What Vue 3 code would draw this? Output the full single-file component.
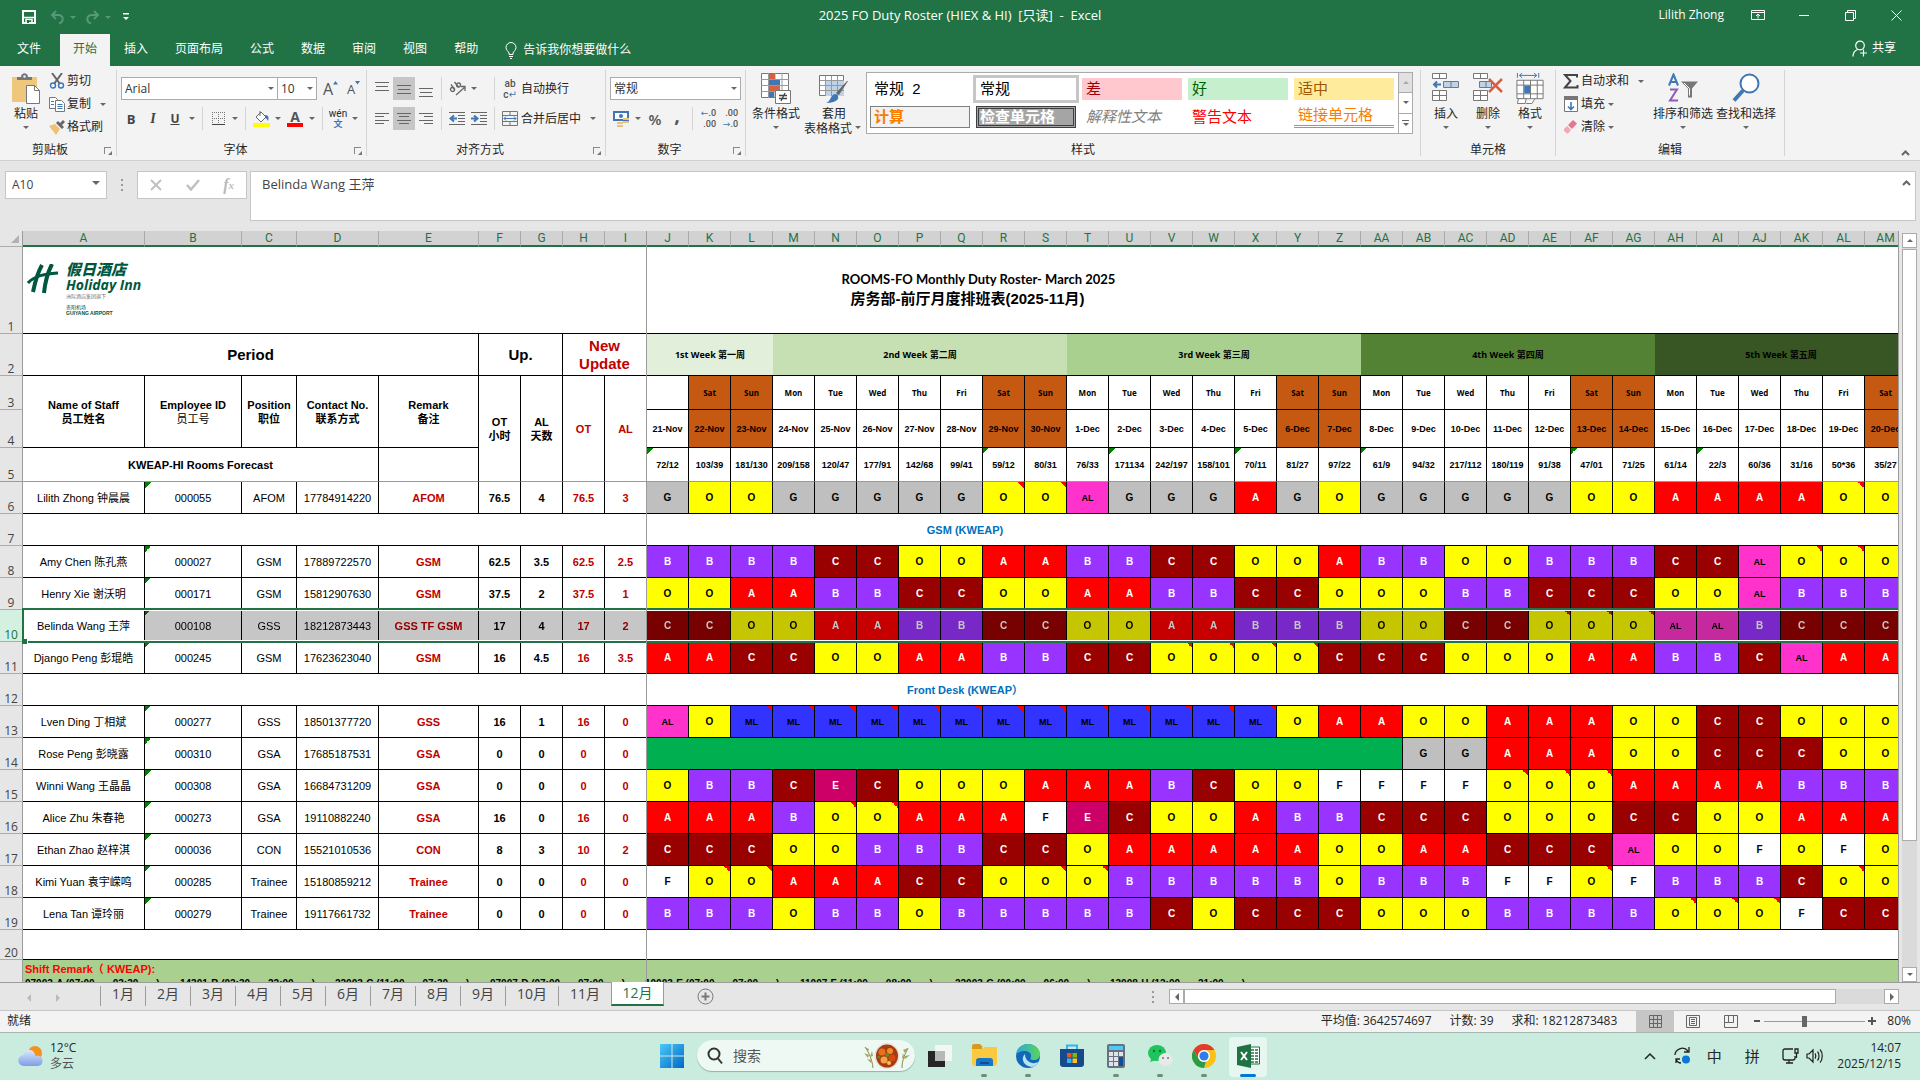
<script setup>
const tabs = ['插入', '页面布局', '公式', '数据', '审阅', '视图', '帮助']
const months = Array.from({ length: 12 }, (_, i) => `${i + 1}月`)

const staffWidths = [122, 97, 55, 82, 100, 42, 42, 42, 42]
const dayWidth = 42
const colWidths = [23, ...staffWidths, ...Array(30).fill(dayWidth)]
const freezeLeft = 22 + staffWidths.reduce((a, b) => a + b, 0)

const letters = Array.from({ length: 39 }, (_, i) =>
  i < 26 ? String.fromCharCode(65 + i) : 'A' + String.fromCharCode(39 + i)
)

const weekdays = ['Sat', 'Sun', 'Mon', 'Tue', 'Wed', 'Thu', 'Fri']
const days = Array.from({ length: 30 }, (_, i) => {
  const name = i === 0 ? '' : weekdays[(i - 1) % 7]
  return {
    name,
    date: i < 10 ? `${21 + i}-Nov` : `${i - 9}-Dec`,
    weekend: name === 'Sat' || name === 'Sun'
  }
})

const weeks = [
  { text: '1st Week 第一周', span: 3, cls: 'w1' },
  { text: '2nd Week 第二周', span: 7, cls: 'w2' },
  { text: '3rd Week 第三周', span: 7, cls: 'w3' },
  { text: '4th Week 第四周', span: 7, cls: 'w4' },
  { text: '5th Week 第五周', span: 6, cls: 'w5' }
]

const forecast = (
  '72/12^ 103/39 181/130 209/158 120/47 177/91 142/68 99/41 59/12^ 80/31 76/33 171134^ 242/197 158/101 70/11^ ' +
  '81/27 97/22 61/9^ 94/32 217/112 180/119 91/38 47/01^ 71/25 61/14 22/3^ 60/36 31/16 50*36 35/27'
).split(' ').map(t => ({ text: t.replace('^', ''), mark: t.endsWith('^') }))

const parse = s => s.split(' ').map(t => ({ code: t.replace('*', ''), note: t.endsWith('*') }))

const person = (row, name, id, pos, tel, remark, nums, codes, leave = 0) => ({
  row, name, id, pos, tel, remark, nums, leave, shifts: parse(codes)
})

const rows = [
  person(6, 'Lilith Zhong 钟晨晨', '000055', 'AFOM', '17784914220', 'AFOM', ['76.5', '4', '76.5', '3'],
    'G O O G G G G G O* O* AL G G G A G O G G G G G O O A A A A O* O'),
  { row: 7, section: 'GSM (KWEAP)' },
  person(8, 'Amy Chen 陈孔燕', '000027', 'GSM', '17889722570', 'GSM', ['62.5', '3.5', '62.5', '2.5'],
    'B B B B C C O O A A B B C C O O A B B O O B B B C C AL O* O* O'),
  person(9, 'Henry Xie 谢沃明', '000171', 'GSM', '15812907630', 'GSM', ['37.5', '2', '37.5', '1'],
    'O O A A B B C C O O A A B B C C O O O B B C C C O O AL B B B'),
  person(10, 'Belinda Wang 王萍', '000108', 'GSS', '18212873443', 'GSS TF GSM', ['17', '4', '17', '2'],
    'C C O O A A B B C C O O A A B B B O O C C O* O* O* AL AL B C C C'),
  person(11, 'Django Peng 彭琨皓', '000245', 'GSM', '17623623040', 'GSM', ['16', '4.5', '16', '3.5'],
    'A A C C O O A A B B C C O* O* O* O* C C C O O O A A B B C AL A A'),
  { row: 12, section: 'Front Desk (KWEAP）' },
  person(13, 'Lven Ding 丁相斌', '000277', 'GSS', '18501377720', 'GSS', ['16', '1', '16', '0'],
    'AL O ML* ML* ML* ML* ML* ML* ML* ML* ML* ML* ML* ML* ML* O A A O O A A A O O C C O O O'),
  person(14, 'Rose Peng 彭晓露', '000310', 'GSA', '17685187531', 'GSA', ['0', '0', '0', '0'],
    'G G A A A O O C C C O O', 18),
  person(15, 'Winni Wang 王晶晶', '000308', 'GSA', '16684731209', 'GSA', ['0', '0', '0', '0'],
    'O B B C E C O O O A A A B C O O F F F F O* O* O* A A A A B B B'),
  person(16, 'Alice Zhu 朱春艳', '000273', 'GSA', '19110882240', 'GSA', ['16', '0', '16', '0'],
    'A A A B O* O* A A A F E C O O A B B C C C O O O C C O O A A A'),
  person(17, 'Ethan Zhao 赵梓淇', '000036', 'CON', '15521010536', 'CON', ['8', '3', '10', '2'],
    'C C C O O B B B C C O A A A A A O O A A C C C AL O O F O F O'),
  person(18, 'Kimi Yuan 袁宇嵘鸣', '000285', 'Trainee', '15180859212', 'Trainee', ['0', '0', '0', '0'],
    'F O* O* A A A C C O O* O* B B B B B O B B B F F O* F B B B C O* O'),
  person(19, 'Lena Tan 谭玲丽', '000279', 'Trainee', '19117661732', 'Trainee', ['0', '0', '0', '0'],
    'B B B O B B O B B B B B C O C C C O O O B B B B O* O* O* F C C')
]

const remarks = [
  ['07003-A (07:00', '03:30', ')'], ['14301-B (02:30', '22:00', ')'], ['22003-C (11:00', '07:30', ')'],
  ['07007-D (07:00', '07:00', ')'], ['10003-E (07:00', '07:00', ')'], ['11007-F (11:00', '08:00', ')'],
  ['22003-G (00:00', '06:00', ')'], ['13008-H (12:00', '21:00', ')']
]
</script>

<template>
  <div class="window">
    <header class="titlebar">
      <div class="quick">
        <button aria-label="保存"><svg width="14" height="14" viewBox="0 0 14 14"><path d="M1 1h12v12H1z" fill="none" stroke="#fff" stroke-width="2" /><path d="M2 7.5h10M4 9.500h6V13H4z" fill="none" stroke="#fff" stroke-width="1.500" /><path d="M5 10h2v3H5z" fill="#217346" /></svg></button>
        <button class="dim undo" aria-label="撤消"><svg width="15" height="15" viewBox="0 0 15 15" fill="none" stroke="currentColor" stroke-width="2"><path d="M6 1 2 5l4 4M2 5h6c6 0 6 7 1 8.500" /></svg><i class="dd"></i></button>
        <button class="dim redo" aria-label="恢复"><svg width="15" height="15" viewBox="0 0 15 15" fill="none" stroke="currentColor" stroke-width="2"><path d="m9 1 4 4-4 4M13 5H7c-6 0-6 7-1 8.500" /></svg><i class="dd"></i></button>
        <button class="more" aria-label="自定义"><svg width="8" height="8" viewBox="0 0 8 8"><path d="M1 0h6v1.500H1zM1 4h6L4 7z" fill="#fff" /></svg></button>
      </div>
      <h1>2025 FO Duty Roster (HIEX &amp; HI)&nbsp; [只读]&nbsp; -&nbsp; Excel</h1>
      <div class="winctl">
        <span>Lilith Zhong</span>
        <button aria-label="功能区显示选项"><svg width="14" height="12" viewBox="0 0 14 12" fill="none" stroke="#fff"><path d="M.5 1.500h13v9H.5zM.5 3.500h13M7 9.500v-4M5 7l2-2 2 2" /></svg></button>
        <button aria-label="最小化"><svg width="10" height="10" viewBox="0 0 10 10"><path d="M0 5h10v1H0z" fill="#fff" /></svg></button>
        <button aria-label="还原"><svg width="11" height="11" viewBox="0 0 11 11" fill="none" stroke="#fff"><path d="M.5 2.500h8v8h-8zM2.500 2.500v-2h8v8h-2" /></svg></button>
        <button aria-label="关闭"><svg width="11" height="11" viewBox="0 0 11 11" fill="none" stroke="#fff"><path d="m.5.5 10 10M10.500.5l-10 10" /></svg></button>
      </div>
    </header>

    <nav class="tabs">
      <button class="file">文件</button>
      <button class="active">开始</button>
      <button v-for="t in tabs" :key="t">{{ t }}</button>
      <button class="tell"><svg width="12" height="17" viewBox="0 0 12 17" fill="none" stroke="#fff"><path d="M4 12.500V11C3 9 1 8 1 5.500a5 5 0 0 1 10 0C11 8 9 9 8 11v1.500zM4 14.500h4M5 16.500h2" /></svg>告诉我你想要做什么</button>
      <button class="share"><svg width="16" height="17" viewBox="0 0 16 17" fill="none" stroke="#fff" stroke-width="1.200"><circle cx="8" cy="5.500" r="4.300" /><path d="M1 16.500c0-4 2-6 4.500-7M11.500 9.500v7M8 13h7" /></svg>共享</button>
    </nav>

    <section class="ribbon">
      <div class="group g-clip">
        <div class="body clip">
          <button class="big"><svg width="28" height="31" viewBox="0 0 28 31"><path d="M0 4h25v25H0z" fill="#efc77c" /><path d="M5 7V4h4c0-5 7-5 7 0h4v3z" fill="#777" /><circle cx="12.500" cy="3.500" r="1.200" fill="#f3f3f3" /><path d="M14.500 12.500h8l5 5v13h-13z" fill="#fff" stroke="#777" /><path d="M22.500 12.500v5h5" fill="none" stroke="#777" /></svg>粘贴<i class="dd"></i></button>
          <div class="stack">
            <button><svg width="16" height="16" viewBox="0 0 16 16" fill="none"><path d="m3 0 8 11M13 0 5 11" stroke="#666" stroke-width="2" /><circle cx="4" cy="12.500" r="2.500" stroke="#3f77b5" stroke-width="1.400" /><circle cx="12" cy="12.500" r="2.500" stroke="#3f77b5" stroke-width="1.400" /></svg>剪切</button>
            <button><svg width="16" height="16" viewBox="0 0 16 16" fill="#fff" stroke="#777"><path d="M.5 1.500h6l2 2v9h-8z" /><path d="M6.500 4.500h6l3 3v8h-9z" /><path d="M2 5.500h3M2 8.500h3M8.500 8.500h5M8.500 10.500h5M8.500 12.500h5" stroke="#3f77b5" /></svg>复制<i class="dd far"></i></button>
            <button><svg width="16" height="15" viewBox="0 0 16 15"><path d="m0 6 6-2 5 5-4 6z" fill="#efc077" /><path d="m7 3 2-2 6 6-2 2zM11 3l3-3 2 2-3 3z" fill="#666" /></svg>格式刷</button>
          </div>
        </div>
        <div class="label">剪贴板<i class="launch"></i></div>
      </div>

      <div class="group g-font">
        <div class="body">
          <div class="line">
            <span class="box f"><select aria-label="字体"><option>Arial</option></select><i class="dd"></i></span>
            <span class="box s"><select aria-label="字号"><option>10</option></select><i class="dd"></i></span>
            <button class="ib grow">A<svg width="5" height="4"><path d="M0 3.500 2.500 0 5 3.500z" fill="#3f77b5" /></svg></button>
            <button class="ib grow small">A<svg width="5" height="4"><path d="M0 0h5L2.500 3.500z" fill="#3f77b5" /></svg></button>
          </div>
          <div class="line second">
            <button class="ib b">B</button><button class="ib i">I</button><button class="ib u">U</button><i class="dd"></i><i class="sep"></i>
            <button class="ib" aria-label="边框"><svg width="13" height="13" viewBox="0 0 13 13" fill="none" stroke="#777"><path d="M.5 0v12M6.500 0v12M12.500 0v12M0 .5h13M0 6.500h13" stroke-dasharray="1 1" /><path d="M0 12.500h13" stroke="#444" /></svg></button><i class="dd"></i><i class="sep"></i>
            <button class="ib" aria-label="填充颜色"><svg width="17" height="17" viewBox="0 0 17 17"><path d="m3 7 5-5 5 5-5 5z" fill="#fff" stroke="#666" /><path d="M7 6V1" stroke="#666" /><path d="M12 5c4 0 4 3 3 6-1-2-2-3-3-3z" fill="#3f77b5" /><path d="M0 13h17v4H0z" fill="#ff0" /></svg></button><i class="dd"></i>
            <button class="ib fc">A</button><i class="dd"></i><i class="sep"></i>
            <button class="ib wen"><span>wén</span><b>文</b></button><i class="dd"></i>
          </div>
        </div>
        <div class="label">字体<i class="launch"></i></div>
      </div>

      <div class="group g-align">
        <div class="body">
          <div class="line">
            <button class="ib" aria-label="顶端对齐"><svg width="14" height="16"><path d="M0 1.500h14M1 5.500h12M0 9.500h14" stroke="#666" /></svg></button>
            <button class="ib on" aria-label="垂直居中"><svg width="14" height="16"><path d="M0 4.500h14M1 8.500h12M0 12.500h14" stroke="#666" /></svg></button>
            <button class="ib" aria-label="底端对齐"><svg width="14" height="16"><path d="M0 7.500h14M1 11.500h12M0 15.500h14" stroke="#666" /></svg></button>
            <i class="sep"></i>
            <button class="ib" aria-label="方向"><svg width="17" height="15" viewBox="0 0 17 15" fill="none" stroke="#666" stroke-width="1.300"><circle cx="3.500" cy="8.500" r="2" /><path d="m2 3.500 4 5.500M5.500 1l4 5" /><circle cx="9.500" cy="4" r="2" /><path d="m7 14 9-8M12 5.500h4V10" /></svg></button><i class="dd"></i>
            <i class="sep after"></i>
            <button class="txt"><span class="ib wrap"><span>ab</span><span>c<em>↵</em></span></span>自动换行</button>
          </div>
          <div class="line">
            <button class="ib" aria-label="左对齐"><svg width="14" height="13"><path d="M0 1.500h14M0 4.500h9M0 8.500h14M0 11.500h9" stroke="#666" /></svg></button>
            <button class="ib on" aria-label="居中"><svg width="14" height="13"><path d="M0 1.500h14M2 4.500h10M0 8.500h14M2 11.500h10" stroke="#666" /></svg></button>
            <button class="ib" aria-label="右对齐"><svg width="14" height="13"><path d="M0 1.500h14M5 4.500h9M0 8.500h14M5 11.500h9" stroke="#666" /></svg></button>
            <i class="sep"></i>
            <button class="ib" aria-label="减少缩进"><svg width="16" height="13"><path d="M0 .5h16M9 3.500h7M9 6.500h7M9 9.500h7M0 12.500h16" stroke="#666" /><path d="M8 6.500H2M5 3.500l-3.500 3 3.500 3" stroke="#3f77b5" stroke-width="2" fill="none" /></svg></button>
            <button class="ib" aria-label="增加缩进"><svg width="16" height="13"><path d="M0 .5h16M9 3.500h7M9 6.500h7M9 9.500h7M0 12.500h16" stroke="#666" /><path d="M0 6.500h6M3 3.500l3.500 3L3 9.500" stroke="#3f77b5" stroke-width="2" fill="none" /></svg></button>
            <i class="sep"></i>
            <button class="txt"><span class="ib"><svg width="16" height="15" viewBox="0 0 16 15" fill="none" stroke="#777"><path d="M.5.5h15v14H.5zM.5 4.500h15M.5 10.500h15M8 .5v4M8 10.500v4" /><path d="M2 7.500h12M4 5.500l-2 2 2 2M12 5.500l2 2-2 2" stroke="#3f77b5" /></svg></span>合并后居中</button><i class="dd last"></i>
          </div>
        </div>
        <div class="label">对齐方式<i class="launch"></i></div>
      </div>

      <div class="group g-num">
        <div class="body">
          <div class="line"><span class="box n"><select aria-label="数字格式"><option>常规</option></select><i class="dd"></i></span></div>
          <div class="line">
            <button class="ib" aria-label="会计数字格式"><svg width="17" height="16" viewBox="0 0 17 16"><path d="M1 1h14v8H1z" fill="#fff" stroke="#3f77b5" stroke-width="2" /><circle cx="8" cy="5" r="2" fill="#3f77b5" /><path d="M10 7h6v2h-6zM10 10h6v2h-6zM4 11h6v2H4zM4 14h6v2H4z" fill="#efc077" /></svg></button><i class="dd"></i>
            <button class="ib pct">%</button><button class="ib comma">,</button><i class="sep"></i>
            <button class="ib dec"><span><em>←</em>.0</span><span>.00</span></button>
            <button class="ib dec"><span>.00</span><span><em>→</em>.0</span></button>
          </div>
        </div>
        <div class="label">数字<i class="launch"></i></div>
      </div>

      <div class="group g-style">
        <div class="body styles">
          <button class="big cond"><svg width="30" height="31" viewBox="0 0 30 31"><path d="M.5.5h27v24H.5z" fill="#fff" stroke="#777" /><path d="M7.500 0v25M14 0v25M21 0v25M0 6.500h28M0 12.500h28M0 18.500h28" stroke="#999" /><path d="M8 1h6v5H8zM8 13h11v5H8z" fill="#d6603f" /><path d="M8 7h11v5H8zM8 19h5v5H8z" fill="#3f77b5" /><path d="M14.500 17.500h15v13h-15z" fill="#fff" stroke="#777" /><path d="M18 22.500h8M18 25.500h8M24 20l-4 8" stroke="#444" stroke-width="1.300" /></svg>条件格式<i class="dd"></i></button>
          <button class="big tbl"><svg width="30" height="31" viewBox="0 0 30 31"><path d="M.5 2.500h24v20H.5z" fill="#fff" stroke="#777" /><path d="M7 8h18v15H7z" fill="#bcd3ea" /><path d="M6.500 3v20M12.500 3v20M18.500 3v20M1 7.500h24M1 12.500h24M1 17.500h24" stroke="#999" /><path d="m29 8-9 14-3-2L28 8z" fill="#666" /><path d="M7 30c5-1 4-9 10-9 5 3 2 9-10 9z" fill="#3f77b5" /></svg>套用<span>表格格式<i class="dd"></i></span></button>
          <div class="gallery">
            <div class="tiles">
              <button>常规&nbsp; 2</button><button class="normal">常规</button><button class="bad">差</button><button class="good">好</button><button class="neutral">适中</button>
              <button class="calc">计算</button><button class="check">检查单元格</button><button class="expl">解释性文本</button><button class="warn">警告文本</button><button class="linked">链接单元格</button>
            </div>
            <div class="gscroll">
              <button class="off" aria-label="上"><i class="dd up"></i></button><button aria-label="下"><i class="dd"></i></button><button aria-label="其他"><u></u><i class="dd"></i></button>
            </div>
          </div>
        </div>
        <div class="label">样式</div>
      </div>

      <div class="group g-cells">
        <div class="body">
          <button class="big"><svg width="28" height="31" viewBox="0 0 28 31" fill="#fff" stroke="#777"><path d="M.5.5h14v5H.5zM7.500.5v5M.5 17.500h14v10H.5zM7.500 17.500v10M.5 22.500h14" /><path d="M11.500 8.500h15v6h-15zM19 8.500v6" fill="#bcd3ea" /><path d="M9 11.500H2M5 8.500l-3 3 3 3" stroke="#3f77b5" stroke-width="2" fill="none" /></svg>插入<i class="dd"></i></button>
          <button class="big"><svg width="30" height="31" viewBox="0 0 30 31" fill="#fff" stroke="#777"><path d="M.5.5h14v5H.5zM7.500.5v5M.5 17.500h14v10H.5zM7.500 17.500v10M.5 22.500h14" /><path d="M6.500 8.500h12v6h-12zM13 8.500v6" fill="#bcd3ea" /><path d="m16 6 13 13M29 6 16 19" stroke="#d6603f" stroke-width="2.500" fill="none" /></svg>删除<i class="dd"></i></button>
          <button class="big"><svg width="28" height="32" viewBox="0 0 28 32" fill="#fff" stroke="#777"><path d="M1 0v5M23 0v5M3 2.500h18M6 0 3 2.500 6 5M18 0l3 2.500L18 5" stroke="#3f77b5" fill="none" /><path d="M.5 7.500h27v19H.5zM7.500 7.500v19M14.500 7.500v19M21.500 7.500v19M.5 12.500h27M.5 21.500h27" /><path d="M8 13h6v8H8z" fill="#3f77b5" stroke="none" /><path d="m1 31.500 1-5h8l-1 5zM10 31.500h6l3-5" /></svg>格式<i class="dd"></i></button>
        </div>
        <div class="label">单元格</div>
      </div>

      <div class="group g-edit">
        <div class="body">
          <div class="stack">
            <button><svg width="16" height="15" viewBox="0 0 16 15"><path d="M14 3.500V1H2l5.500 6L2 13.500h12.500V11" fill="none" stroke="#444" stroke-width="2" /></svg>自动求和<i class="dd far"></i></button>
            <button><svg width="16" height="16" viewBox="0 0 16 16"><path d="M1.500.5h13v15h-13z" fill="#fff" stroke="#777" /><path d="M1 0h14v4H1z" fill="#777" /><path d="M8 6v8M5 10.500l3 3 3-3" stroke="#3f77b5" stroke-width="1.600" fill="none" /></svg>填充<i class="dd"></i></button>
            <button><svg width="16" height="14" viewBox="0 0 16 14"><path d="m1 9 3-3 4 4-3 3.500H4L1 11z" fill="#f4a6b4" /><path d="m5 5 5-5 4 3.500L9 9z" fill="#e8778c" /></svg>清除<i class="dd"></i></button>
          </div>
          <button class="big sort"><svg width="30" height="30" viewBox="0 0 30 30" fill="none"><path d="M1 12 5.500 1 10 12M3 8.500h5" stroke="#3f77b5" stroke-width="2" /><path d="M2 16h7L2 27h8" stroke="#8e5bb5" stroke-width="2" /><path d="M13 8h17l-6 7v9h-4v-9z" fill="#777" /><path d="M16 9.500 21.500 15v7" stroke="#fff" /></svg>排序和筛选<i class="dd"></i></button>
          <button class="big"><svg width="28" height="30" viewBox="0 0 28 30" fill="#fff" stroke="#3f77b5"><circle cx="17.500" cy="10" r="9" stroke-width="2" /><path d="M11 17 2 27" stroke-width="4" /></svg>查找和选择<i class="dd"></i></button>
        </div>
        <div class="label">编辑</div>
      </div>
      <button class="collapse" aria-label="折叠功能区"><svg width="9" height="6"><path d="m1 5 3.500-3.500L8 5" fill="none" stroke="#666" stroke-width="2" /></svg></button>
    </section>

    <section class="formula">
      <label class="namebox"><input value="A10" aria-label="名称框"><i class="dd"></i></label>
      <i class="dots"></i>
      <div class="fx">
        <button aria-label="取消"><svg width="12" height="12"><path d="m1 1 10 10M11 1 1 11" stroke="#c0c0c0" stroke-width="2" /></svg></button>
        <button aria-label="输入"><svg width="14" height="12"><path d="m1 6 4 4.500L13 1" fill="none" stroke="#c0c0c0" stroke-width="2.500" /></svg></button>
        <button class="fn"><i>f</i><sub>x</sub></button>
      </div>
      <div class="entry">
        <textarea aria-label="编辑栏">Belinda Wang 王萍</textarea>
        <svg width="9" height="6"><path d="m1 5 3.500-3.500L8 5" fill="none" stroke="#666" stroke-width="2" /></svg>
      </div>
    </section>

    <main class="sheetarea">
      <div class="sheet">
        <table>
          <colgroup><col v-for="(w, i) in colWidths" :key="i" :style="{ width: w + 'px' }"></colgroup>
          <thead>
            <tr class="cols"><th class="corner"><i></i></th><th v-for="l in letters" :key="l">{{ l }}</th></tr>
          </thead>
          <tbody>
            <tr class="r1">
              <th>1</th>
              <td colspan="39" class="title">
                <div class="logo">
                  <svg width="32" height="30" viewBox="0 0 32 30" fill="none" stroke="#00573f"><path d="M15 1C11 8 8 18 6 28" stroke-width="4" /><path d="M25 0c-4 8-7 18-8 29" stroke-width="4" /><path d="M1 19C8 11 20 10 31 9" stroke-width="3" /></svg>
                  <div><b class="cn">假日酒店</b><b class="en">Holiday Inn</b><small>洲际酒店集团旗下</small><small class="ap">贵阳机场<br><b>GUIYANG AIRPORT</b></small></div>
                </div>
                <p class="t1">ROOMS-FO Monthly Duty Roster- March 2025</p>
                <p class="t2">房务部-前厅月度排班表(2025-11月)</p>
              </td>
            </tr>
            <tr class="r2">
              <th>2</th>
              <td colspan="5" class="h">Period</td><td colspan="2" class="h">Up.</td><td colspan="2" class="h red">New<br>Update</td>
              <td v-for="w in weeks" :key="w.text" :colspan="w.span" class="week" :class="w.cls">{{ w.text }}</td>
            </tr>
            <tr class="r3">
              <th>3</th>
              <td rowspan="2" class="bold">Name of Staff<br>员工姓名</td><td rowspan="2" class="bold">Employee ID<br><span class="plain">员工号</span></td>
              <td rowspan="2" class="bold">Position<br>职位</td><td rowspan="2" class="bold">Contact No.<br>联系方式</td><td rowspan="2" class="bold">Remark<br>备注</td>
              <td rowspan="3" class="bold frz">OT<br>小时</td><td rowspan="3" class="bold frz">AL<br>天数</td>
              <td rowspan="3" class="bold red frz">OT</td><td rowspan="3" class="bold red frz">AL</td>
              <td v-for="d in days" :key="d.date" class="wd" :class="{ weekend: d.weekend }">{{ d.name }}</td>
            </tr>
            <tr class="r4"><th>4</th><td v-for="d in days" :key="d.date" class="date" :class="{ weekend: d.weekend }">{{ d.date }}</td></tr>
            <tr class="r5">
              <th>5</th><td colspan="4" class="bold">KWEAP-HI Rooms Forecast</td><td></td>
              <td v-for="(f, i) in forecast" :key="i" class="date" :class="{ err: f.mark }">{{ f.text }}</td>
            </tr>
            <tr v-for="r in rows" :key="r.row" class="staff" :class="{ selected: r.row === 10 }">
              <th>{{ r.row }}<i v-if="r.row === 10" class="outline"></i></th>
              <td v-if="r.section" colspan="39" class="section">{{ r.section }}</td>
              <template v-else>
                <td class="name">{{ r.name }}</td><td class="err">{{ r.id }}</td><td>{{ r.pos }}</td><td>{{ r.tel }}</td>
                <td class="bold red remark">{{ r.remark }}</td>
                <td v-for="(n, i) in r.nums" :key="i" class="bold" :class="{ red: i > 1 }">{{ n }}</td>
                <td v-if="r.leave" :colspan="r.leave" class="away"></td>
                <td v-for="(s, i) in r.shifts" :key="'s' + i" class="shift" :class="['s-' + s.code, { note: s.note }]">{{ s.code }}</td>
              </template>
            </tr>
            <tr class="r20"><th>20</th><td colspan="39"></td></tr>
            <tr class="r21">
              <th></th>
              <td colspan="39"><p class="rt">Shift Remark（ KWEAP):</p><p class="rl"><span v-for="r in remarks" :key="r[0]"><b v-for="p in r" :key="p">{{ p }}</b></span></p></td>
            </tr>
          </tbody>
        </table>
        <i class="freeze" :style="{ left: freezeLeft + 'px' }"></i>
      </div>
      <div class="vscroll"><button aria-label="向上"><i class="dd up"></i></button><div class="thumb"></div><button aria-label="向下"><i class="dd"></i></button></div>
    </main>

    <nav class="sheets">
      <button class="arr"><i class="tri l"></i></button><button class="arr"><i class="tri r"></i></button>
      <div class="list"><button v-for="(m, i) in months" :key="m" :class="{ active: i === 11, wide: i > 8 }">{{ m }}</button></div>
      <button class="add" aria-label="新工作表"><svg width="17" height="17" fill="none" stroke="#777"><circle cx="8.500" cy="8.500" r="7.500" /><path d="M8.500 4.500v8M4.500 8.500h8" stroke-width="2" /></svg></button>
      <i class="dots"></i>
      <div class="hscroll"><button aria-label="向左"><i class="tri l"></i></button><div class="thumb"></div><div class="gap"></div><button aria-label="向右"><i class="tri r"></i></button></div>
    </nav>

    <footer class="status">
      <span class="ready">就绪</span>
      <span>平均值: 3642574697</span><span>计数: 39</span><span>求和: 18212873483</span>
      <div class="views">
        <button class="on" aria-label="普通"><svg width="13" height="13" fill="none" stroke="#666"><path d="M.5.500h12v12H.5zM4.500.500v12M8.500.500v12M.5 4.500h12M.5 8.500h12" /></svg></button>
        <button aria-label="页面布局"><svg width="14" height="13" fill="none" stroke="#666"><path d="M.5.500h13v12H.5zM3.500 2.500h7v8h-7zM5 4.500h4M5 6.500h4M5 8.500h4" /></svg></button>
        <button aria-label="分页预览"><svg width="14" height="13" fill="none" stroke="#666"><path d="M.5.500h13v12H.5zM4.500.500v7h-4M9.500.500v7h-5" /></svg></button>
      </div>
      <button class="z" aria-label="缩小"><svg width="6" height="2"><path d="M0 0h6v2H0z" fill="#555" /></svg></button><input type="range" min="10" max="400" value="165" aria-label="缩放"><button class="z" aria-label="放大"><svg width="8" height="8"><path d="M3 0h2v3h3v2H5v3H3V5H0V3h3z" fill="#555" /></svg></button><span class="pct80">80%</span>
    </footer>

    <footer class="taskbar">
      <button class="weather">
        <svg width="25" height="22" viewBox="0 0 25 22"><defs><linearGradient id="cl" x2="0" y2="1"><stop stop-color="#dce8fb" /><stop offset="1" stop-color="#7e9fe6" /></linearGradient></defs><circle cx="17" cy="8" r="7" fill="#f5921e" /><path d="M6 21a5.500 5.500 0 0 1-.5-11C6 6 9 4 12 5c3 0 5 3 5.500 6 4-1 7 1 7 5s-3 5-6 5z" fill="url(#cl)" /></svg>
        <span>12°C<br><em>多云</em></span>
      </button>
      <div class="apps">
        <button aria-label="开始"><svg width="24" height="24" viewBox="0 0 24 24"><defs><linearGradient id="wn" x2="1" y2="1"><stop stop-color="#4cc9f7" /><stop offset="1" stop-color="#0067c8" /></linearGradient></defs><path d="M0 0h11.500v11.500H0zM12.500 0H24v11.500H12.500zM0 12.500h11.500V24H0zM12.500 12.500H24V24H12.500z" fill="url(#wn)" /></svg></button>
        <label class="search">
          <svg width="16" height="18" viewBox="0 0 16 18" fill="none" stroke="#333" stroke-width="2"><circle cx="7" cy="7" r="5.500" /><path d="m11 11.500 4 5" /></svg>
          <input placeholder="搜索" aria-label="搜索">
          <svg width="46" height="26" viewBox="0 0 46 26"><path d="M9 25C8 16 5 10 1 4M38 25c0-8 3-14 6-20" fill="none" stroke="#8a8a4a" /><path d="m1 4 4 2-1 3zM0 10l5 2-1 3zM3 16l5 1-1 3zM8 8l1 5-3 1zM44 5l-5 2 2 3zM46 12l-5 1v3zM39 10l-1 5 3 1z" fill="#a8a65a" /><ellipse cx="23" cy="13" rx="12.500" ry="13" fill="#e9e2da" /><ellipse cx="23" cy="13" rx="11" ry="11.500" fill="#a63c12" /><circle cx="18" cy="9" r="3.500" fill="#e8701c" /><circle cx="26" cy="8" r="3" fill="#f0902a" /><circle cx="28" cy="15" r="3.500" fill="#d9480f" /><circle cx="20" cy="17" r="3.500" fill="#f2a440" /><circle cx="23" cy="12" r="2" fill="#6a8a2a" /><circle cx="25" cy="20" r="2" fill="#f6c25c" /><circle cx="15" cy="14" r="1.500" fill="#5c8a2c" /></svg>
        </label>
        <button aria-label="任务视图"><svg width="24" height="24" viewBox="0 0 24 24"><path d="M7 1h17v16H7z" fill="#f4f6f5" /><path d="M0 7h17v16H0z" fill="#262626" /><path d="M7 7h10v10H7z" fill="#b5b9b7" /></svg></button>
        <button class="run" aria-label="文件资源管理器"><svg width="25" height="23" viewBox="0 0 25 23"><path d="M0 2q0-2 2-2h6l3 3h-1v6H0z" fill="#d99a1c" /><path d="M0 5h10l2-2h13v16q0 3-3 3H3q-3 0-3-3z" fill="#fbc93f" /><path d="M4 22v-5q0-3 3-3h11q3 0 3 3v5z" fill="#1676cc" /><path d="M8 18h9v2H8z" fill="#0b4f98" /></svg></button>
        <button class="run" aria-label="Edge"><svg width="24" height="24" viewBox="0 0 24 24"><defs><linearGradient id="eg"><stop stop-color="#2aa8e0" /><stop offset="1" stop-color="#5bd45a" /></linearGradient></defs><circle cx="12" cy="12" r="12" fill="#1268b8" /><path d="M0 11C1 4 6 0 12 0c7 0 12 5 12 10 0 4-3 6-6 6-4 0-4-1-3-3 1-4-3-6-6-6-5 0-8 2-9 4z" fill="url(#eg)" /><path d="M9 10c-4 3-3 12 7 13 4-1 6-4 6-5-5 3-13 0-13-8z" fill="#b9e4ee" /></svg></button>
        <button aria-label="Microsoft Store"><svg width="24" height="24" viewBox="0 0 24 24"><path d="M7 6V1.500h10V6" fill="none" stroke="#2fb6ef" stroke-width="2" /><path d="M0 5h24v15q0 3-3 3H3q-3 0-3-3z" fill="#17498c" /><path d="M7 9h4.500v4.500H7z" fill="#f25022" /><path d="M12.500 9H17v4.500h-4.500z" fill="#7fba00" /><path d="M7 14.500h4.500V19H7z" fill="#31b6f5" /><path d="M12.500 14.500H17V19h-4.500z" fill="#ffc21a" /></svg></button>
        <button class="run" aria-label="计算器"><svg width="18" height="24" viewBox="0 0 18 24"><rect width="18" height="24" rx="2" fill="#66727f" /><path d="M2 2h14v4H2z" fill="#4fc8f4" /><path d="M2 8h4v4H2zM7 8h4v4H7zM12 8h4v4h-4zM2 13h4v4H2zM7 13h4v4H7zM2 18h4v4H2zM7 18h4v4H7z" fill="#dfe4e8" /><path d="M12 13h4v9h-4z" fill="#0c4f94" /></svg></button>
        <button class="run" aria-label="微信"><svg width="25" height="22" viewBox="0 0 25 22"><ellipse cx="9" cy="8" rx="9" ry="8" fill="#1fc45c" /><path d="m2 17 2-5 4 3z" fill="#1fc45c" /><circle cx="6" cy="6" r="1.200" fill="#0c7a36" /><circle cx="12" cy="6" r="1.200" fill="#0c7a36" /><ellipse cx="17.500" cy="14.500" rx="7" ry="6.500" fill="#e9e9e9" /><circle cx="15" cy="13" r="1" fill="#777" /><circle cx="20" cy="13" r="1" fill="#777" /></svg></button>
        <button class="run" aria-label="Chrome"><svg width="24" height="24" viewBox="0 0 24 24"><circle cx="12" cy="12" r="12" fill="#fbc116" /><path d="M1.600 6A12 12 0 0 1 22.400 6H12a6 6 0 0 0-5.200 9z" fill="#e33b2e" /><path d="M1.600 6 6.800 15a6 6 0 0 0 7 2.700L12 24A12 12 0 0 1 1.600 6z" fill="#2a9c48" /><circle cx="12" cy="12" r="6" fill="#fff" /><circle cx="12" cy="12" r="4.600" fill="#2f7cf0" /></svg></button>
        <button class="run cur" aria-label="Excel"><svg width="23" height="24" viewBox="0 0 23 24"><path d="M12 3h10.500v17H12z" fill="#fff" stroke="#1f7244" /><path d="M14 6h3M18 6h3M14 9h3M18 9h3M14 12h3M18 12h3M14 15h3M18 15h3M14 18h3M18 18h3" stroke="#1f7244" stroke-width="1.500" /><path d="M0 3 14 0v24L0 21z" fill="#1f7244" /><path d="m4 8 6 8M10 8l-6 8" stroke="#fff" stroke-width="2" /></svg></button>
      </div>
      <div class="tray">
        <button aria-label="显示隐藏的图标"><svg width="12" height="8" fill="none" stroke="#222" stroke-width="1.500"><path d="m1 7 5-5 5 5" /></svg></button>
        <button class="sync" aria-label="同步"><svg width="17" height="17" viewBox="0 0 17 17" fill="none" stroke="#222" stroke-width="1.300"><path d="M1 8C1 3 9-2 14 4M15 0v5h-5M2 16v-4h4M2 12c1 3 3 4 5 4" /><circle cx="12" cy="12.500" r="4" fill="#0b78d8" stroke="none" /></svg></button>
        <button class="ime">中</button><button class="ime pin">拼</button>
        <button class="vol" aria-label="网络和音量"><svg width="17" height="16" viewBox="0 0 17 16" fill="none" stroke="#222" stroke-width="1.300"><path d="M11 1H3Q1 1 1 3v7q0 2 2 2h8q2 0 2-2V8M7 12v3M4 15h7M13 1h3v4h-3zM14.500 5v5" /></svg><svg width="17" height="16" viewBox="0 0 17 16" fill="none" stroke="#222" stroke-width="1.200"><path d="M1 6h2l4-4v12L3 10H1zM9 5.500c1 1 1 4 0 5M11.500 3.500c2 2 2 7 0 9M14 1.500c3 3 3 10 0 13" /></svg></button>
        <time>14:07<br>2025/12/15</time>
      </div>
    </footer>
  </div>
</template>

<style>
body { margin: 0; overflow: hidden; }
</style>

<style scoped>
.window { display: flex; flex-direction: column; height: 100vh; overflow: hidden; background: #e6e6e6; color: #262626; font: 12px/16px "Open Sans", "Noto Sans CJK SC", sans-serif; }
.window * { box-sizing: border-box; }
button, input, select, textarea { font: inherit; color: inherit; border: 0; background: none; padding: 0; margin: 0; outline: 0; border-radius: 0; }
button { display: flex; align-items: center; justify-content: center; flex: none; white-space: nowrap; }
svg { flex: none; display: block; }
p { margin: 0; }
i, em { font-style: normal; }
.dd { display: flex; align-items: center; justify-content: center; width: 12px; flex: none; }
.dd::before { content: ""; border: 3px solid transparent; border-top-color: #666; border-bottom: 0; }
.dd.up::before { border: 3px solid transparent; border-bottom-color: #666; border-top: 0; }

.titlebar { display: grid; grid-template-columns: 1fr auto 1fr; align-items: center; height: 34px; flex: none; background: #217346; color: #fff; }
.titlebar h1 { margin: 0; font-size: 13px; font-weight: 400; padding-bottom: 4px; }
.quick { display: flex; align-items: center; padding-left: 22px; }
.dim { color: #579878; }
.dim .dd { margin-left: 2px; }
.dim .dd::before { border-top-color: #579878; }
.undo { margin-left: 14px; }
.redo { margin-left: 6px; }
.more { margin-left: 8px; }
.winctl { display: flex; justify-content: flex-end; align-items: center; padding: 0 17px 4px 0; }
.winctl button { width: 14px; margin-left: 32px; }
.winctl span + button { margin-left: 27px; }

.tabs { display: flex; height: 32px; flex: none; gap: 1px; padding-left: 4px; background: #217346; color: #fff; }
.tabs button { padding: 0 13px 2px; }
.tabs .file { margin-right: 5px; }
.tabs .active { background: #f3f3f3; color: #217346; }
.tabs .tell { gap: 6px; padding-bottom: 0; }
.tabs .share { gap: 4px; margin-left: auto; padding: 0 24px 4px 0; }

.ribbon { display: flex; height: 95px; flex: none; background: #f3f3f3; border-bottom: 1px solid #d0d0d0; position: relative; }
.group { display: flex; flex-direction: column; flex: none; margin: 4px 0; border-right: 1px solid #d4d4d4; }
.body { height: 73px; flex: none; }
.label { position: relative; text-align: center; line-height: 14px; }
.label:has(.launch) { padding-right: 16px; }
.launch { position: absolute; right: 5px; top: 4px; width: 7px; height: 7px; border: solid #888; border-width: 1px 0 0 1px; }
.launch::after { content: ""; position: absolute; right: -1px; bottom: -1px; border: 2px solid transparent; border-right-color: #777; border-bottom-color: #777; }
.big { flex-direction: column; justify-content: flex-start; line-height: 15px; padding-top: 3px; }
.big svg { height: 31px; margin-bottom: 2px; }
.big .dd { height: 13px; }
.big span { display: flex; }
.stack { display: flex; flex-direction: column; }
.stack button { height: 23px; justify-content: flex-start; padding-bottom: 1px; }
.stack svg { margin-right: 2px; }
.stack .far { margin-left: 6px; }
.g-clip { width: 117px; }
.clip { display: flex; padding-left: 12px; }
.clip .big { padding-right: 2px; }
.clip .stack { margin-left: 7px; }
.clip .stack .dd { margin-left: 6px; }
.g-font { width: 250px; padding-left: 4px; }
.second { margin-left: -1px; }
.g-align { width: 239px; padding-left: 4px; }
.g-num { width: 140px; padding-left: 4px; }
.g-style { width: 675px; }
.g-cells { width: 135px; }
.g-edit { width: 229px; }
.line { display: flex; height: 23px; margin-top: 7px; }
.ib { display: flex; align-items: center; justify-content: center; width: 22px; height: 23px; position: relative; flex: none; }
.on { background: #c6c6c6; }
.sep { width: 1px; margin: 0 4px; background: #d4d4d4; flex: none; }
.sep.after { margin-left: 14px; }
.txt { color: #262626; }
.box { display: flex; border: 1px solid #ababab; background: #fff; }
.box select { appearance: none; flex: 1; min-width: 0; padding-left: 3px; color: #333; }
.box.f { width: 157px; }
.box.s { width: 40px; margin: 0 2px 0 -1px; }
.box.n { width: 131px; }
.grow { font-size: 16px; color: #555; align-items: center; width: 23px; }
.grow.small { font-size: 13px; }
.grow svg { align-self: flex-start; margin-top: 4px; }
.b { font-weight: 700; color: #444; font-size: 13px; }
.i { font: italic 700 14px "Liberation Serif", serif; color: #444; }
.u { font-weight: 700; color: #444; text-decoration: underline; }
.fc { font-weight: 700; font-size: 14px; line-height: 15px; color: #555; align-items: flex-start; padding-top: 2px; }
.fc::after { content: ""; position: absolute; left: 3px; right: 3px; bottom: 3px; height: 4px; background: #f00; }
.wen { flex-direction: column; font: 10px/11px Roboto, "Noto Sans CJK SC", sans-serif; }
.wen b { color: #3f77b5; font-size: 9px; }
.wrap { flex-direction: column; font: 500 10px/11px Roboto, "DejaVu Sans", sans-serif; color: #555; }
.wrap em, .dec em { color: #3f77b5; }
.last { margin-left: 6px; }
.pct { font-size: 15px; color: #555; font-weight: 600; }
.comma { font-weight: 700; font-size: 20px; padding-bottom: 8px; color: #555; }
.dec { flex-direction: column; align-items: flex-end; font: 500 9px/11px Roboto, "DejaVu Sans", sans-serif; color: #555; padding-right: 3px; }
.styles { display: flex; align-items: flex-start; }
.cond { width: 60px; }
.tbl { width: 56px; margin-right: 4px; }
.gallery { display: flex; height: 62px; margin-top: 2px; border: 1px solid #ababab; background: #fff; }
.tiles { display: grid; grid-template-columns: repeat(5, 100px); grid-auto-rows: 22px; gap: 6px; padding: 5px 3px; }
.tiles button { justify-content: flex-start; padding: 0 0 1px 4px; font: 15px/20px "Liberation Sans", "Noto Sans CJK SC", sans-serif; color: #000; }
.tiles .normal { outline: 3px solid #c6c6c6; }
.tiles .bad { background: #ffc7ce; color: #9c0006; }
.tiles .good { background: #c6efce; color: #006100; }
.tiles .neutral { background: #ffeb9c; color: #9c5700; }
.tiles .calc { background: #f2f2f2; border: 1px solid #7f7f7f; color: #fa7d00; font-weight: 700; padding-left: 3px; }
.tiles .check { background: #a5a5a5; border: 3px double #3f3f3f; color: #fff; font-weight: 700; padding: 0 0 1px 1px; }
.tiles .expl { color: #7f7f7f; font-style: italic; }
.tiles .warn { color: #f00; }
.tiles .linked { color: #fa7d00; border-bottom: 3px double #ff8001; }
.gscroll { width: 15px; margin: -1px -1px -1px 1px; display: flex; flex-direction: column; }
.gscroll button { flex: 1; border: 1px solid #ababab; flex-direction: column; gap: 2px; margin-top: -1px; }
.gscroll button:first-child { margin: 0; }
.gscroll .off { background: #e1e1e1; }
.gscroll .off .dd::before { border-bottom-color: #aaa; }
.gscroll u { width: 7px; height: 1px; background: #666; }
.g-cells .body { display: flex; padding-left: 4px; }
.g-cells .big { width: 42px; }
.g-edit .body { display: flex; padding-left: 7px; }
.g-edit .stack { width: 87px; }
.sort { width: 66px; }
.collapse { position: absolute; right: 10px; bottom: 4px; }

.formula { display: flex; height: 70px; flex: none; padding: 10px 4px 0 5px; align-items: flex-start; color: #444; }
.namebox { display: flex; width: 102px; height: 28px; border: 1px solid #c6c6c6; background: #fff; }
.namebox input { flex: 1; min-width: 0; padding-left: 6px; }
.namebox .dd { width: 20px; padding-bottom: 4px; }
.namebox .dd::before { border-width: 4px 4px 0; }
.dots { width: 2px; height: 12px; margin: 8px 14px; background: repeating-linear-gradient(#999 0 2px, transparent 2px 5px); flex: none; }
.fx { display: flex; justify-content: space-between; align-items: center; width: 110px; height: 28px; padding: 0 12px; border: 1px solid #c6c6c6; background: #fff; color: #bbb; }
.fn { font: italic 700 16px/20px "Liberation Serif", serif; }
.fn i { font-style: italic; }
.fn sub { font-size: 11px; vertical-align: baseline; }
.entry { display: flex; flex: 1; height: 50px; margin-left: 3px; padding: 4px 4px 0 11px; border: 1px solid #c6c6c6; background: #fff; }
.entry textarea { flex: 1; resize: none; height: 40px; overflow: hidden; font-size: 13px; line-height: 16px; }
.entry svg { margin-top: 4px; }

.sheetarea { display: flex; flex: 1; min-height: 0; }
.sheet { flex: 1; min-width: 0; overflow: hidden; position: relative; border-right: 1px solid #9b9b9b; background: #fff; }
table { table-layout: fixed; width: 0; border-collapse: separate; border-spacing: 0; font: 11px/14px "Liberation Sans", "Noto Sans CJK SC", sans-serif; color: #000; }
th, td { padding: 0; text-align: center; vertical-align: middle; white-space: nowrap; font-weight: 400; }
td { border-right: 1px solid #000; border-bottom: 1px solid #000; }
.cols th { height: 16px; padding-top: 1px; background: #d2d2d2; border-bottom: 2px solid #217346; border-right: 1px solid #ababab; font: 12px/13px Roboto, sans-serif; color: #217346; }
.cols .corner { background: #e6e6e6; border-bottom: 1px solid #ababab; border-right-color: #9b9b9b; }
.corner i { display: block; width: 0; margin-left: 11px; border: 4px solid transparent; border-right-color: #b2b2b2; border-bottom-color: #b2b2b2; }
tbody th { background: #e6e6e6; border-right: 1px solid #9b9b9b; border-bottom: 1px solid #ababab; vertical-align: bottom; font: 12px/12px "Open Sans", sans-serif; color: #444; }
.r1 > * { height: 87px; }
.r2 > * { height: 42px; }
.r3 > * { height: 34px; }
.r4 > * { height: 38px; }
.r5 > * { height: 34px; }
.r5 > *, .frz { border-bottom-color: #9b9b9b; }
.staff > * { height: 32px; }
.r20 > * { height: 30px; }
.title { position: relative; }
.title p { font: 700 13px/20px Lato, "Noto Sans CJK SC", sans-serif; }
.title .t1 { padding-left: 28px; }
.title .t2 { font-size: 15px; padding: 0 0 2px 6px; font-family: "Liberation Sans", "Noto Sans CJK SC", sans-serif; }
.logo { position: absolute; left: 4px; top: 13px; display: flex; gap: 7px; color: #00573f; text-align: left; align-items: flex-start; }
.logo svg { margin-top: 4px; }
.logo b, .logo small { display: block; }
.logo .cn { font: italic 900 15px/17px "Noto Sans CJK SC", sans-serif; }
.logo .en { font: italic 700 14px/16px "Open Sans", sans-serif; }
.logo small { font-size: 5px; line-height: 7px; color: #777; }
.logo .ap { margin-top: 4px; font-size: 5px; line-height: 6px; color: #00573f; }
.h { font-size: 15px; line-height: 18px; font-weight: 700; }
.red { color: #c00000; }
.bold { font-weight: 700; }
.plain { font-weight: 400; }
.week { border-right: 0; font: 700 9px/14px "Open Sans", "Noto Sans CJK SC", sans-serif; }
.w1 { background: #e2efda; }
.w2 { background: #c6e0b4; }
.w3 { background: #a9d08e; }
.w4 { background: #548235; }
.w5 { background: #375623; }
.wd { font: 700 8px/14px "Open Sans", sans-serif; }
.date { font-size: 9px; font-weight: 700; }
.weekend { background: #c65911; }
.err { background-image: linear-gradient(to bottom right, #008000 50%, transparent 50%); background-size: 6px 6px; background-repeat: no-repeat; }
.note { background-image: linear-gradient(to bottom left, #f00 50%, transparent 50%); background-size: 6px 6px; background-position: right top; background-repeat: no-repeat; }
.section { font-weight: 700; color: #0070c0; border-right: 0; }
.shift { font-size: 10px; font-weight: 700; }
.s-AL, .s-ML { font-size: 9px; }
.s-G { background-color: #bfbfbf; }
.s-O { background-color: #ff0; }
.s-AL { background-color: #f3c; }
.s-ML { background-color: #33f; }
.s-A { background-color: #f00; color: #fff; }
.s-B { background-color: #93f; color: #fff; }
.s-C { background-color: #900; color: #fff; }
.s-E { background-color: #c06; color: #fff; }
.away { background: #00b050; }
.selected { position: relative; }
.selected th { background: #d3f0e0; color: #217346; }
.selected td { background-color: #fff; filter: brightness(.776); }
.selected .name { filter: none; }
.selected .s-O { background-color: #ff0; }
.selected .s-AL { background-color: #f3c; }
.selected .s-A { background-color: #f00; }
.selected .s-B { background-color: #93f; }
.selected .s-C { background-color: #900; }
.outline { position: absolute; z-index: 2; left: 22px; right: 0; top: -2px; bottom: -1px; border: 2px solid #217346; box-shadow: inset 0 1px #fff, inset 0 -1px #fff; }
.outline::after { content: ""; position: absolute; left: -2px; bottom: -3px; width: 5px; height: 5px; background: #217346; box-shadow: 1px 0 #fff; }
.r21 td { height: 60px; vertical-align: top; text-align: left; background: #a9d08e; padding: 1px 2px; font-weight: 700; }
.rt { color: #f00; line-height: 16px; }
.rl { display: flex; line-height: 14px; font-size: 10px; }
.rl span { display: flex; gap: 18px; width: 155px; }
.freeze { position: absolute; z-index: 3; top: 0; bottom: 0; width: 1px; background: #9b9b9b; }
.vscroll { display: flex; flex-direction: column; width: 15px; margin: 2px 3px 0 3px; background: #dadada; }
.vscroll button { height: 15px; border: 1px solid #ababab; background: #fff; }
.vscroll .thumb { height: 592px; margin-top: 1px; border: 1px solid #ababab; background: #fff; margin-bottom: auto; }

.sheets { display: flex; height: 28px; flex: none; border-top: 1px solid #9b9b9b; color: #444; font-size: 14px; padding-right: 21px; position: relative; }
.arr { width: 29px; padding-top: 2px; }
.arr:first-child { margin-left: 14px; }
.arr .tri { opacity: .35; }
.tri { border: 4px solid transparent; }
.tri.l { border-right-color: #666; border-left: 0; }
.tri.r { border-left-color: #666; border-right: 0; }
.list { display: flex; margin-left: 28px; }
.list button { width: 45px; height: 20px; margin-top: 3px; border-left: 1px solid #9b9b9b; padding-bottom: 4px; }
.list .wide { width: 53px; }
.list .active { height: 24px; margin-top: -1px; background: #fff; border-right: 1px solid #9b9b9b; border-bottom: 2px solid #217346; color: #217346; padding-bottom: 0; }
.add { margin-left: 33px; }
.sheets > .dots { margin: 8px 15px 8px auto; }
.hscroll { display: flex; width: 730px; height: 15px; margin-top: 6px; background: #dadada; }
.hscroll button { width: 15px; border: 1px solid #ababab; background: #fff; }
.hscroll .thumb { flex: 1; border: 1px solid #ababab; background: #fff; }
.hscroll .gap { width: 48px; }

.status { display: flex; align-items: center; height: 22px; flex: none; border-top: 1px solid #c6c6c6; background: #f3f3f3; padding: 0 9px 1px 0; }
.status > span { margin-right: 18px; }
.status .ready { margin: 0 auto 0 7px; }
.views { display: flex; height: 21px; margin: 0 0 -1px 1px; }
.views button { width: 38px; }
.z { width: 14px; height: 16px; }
input[type=range] { appearance: none; width: 101px; height: 12px; background: linear-gradient(#999, #999) center / 100% 1px no-repeat; }
input[type=range]::-webkit-slider-thumb { appearance: none; width: 5px; height: 11px; background: #666; }
.status .pct80 { margin: 0 0 0 8px; }

.taskbar { display: grid; grid-template-columns: 1fr auto 1fr; height: 48px; flex: none; padding-bottom: 2px; background: #c9ecdf; border-top: 1px solid #a5b9b1; }
.weather { justify-content: flex-start; gap: 7px; padding-left: 18px; text-align: left; }
.weather em { color: #555; }
.apps { display: flex; align-items: center; }
.apps button { width: 44px; height: 42px; position: relative; }
.search { display: flex; align-items: center; width: 218px; height: 31px; margin: 0 3px; padding: 0 5px 0 10px; border-radius: 16px; background: #eef9f4; box-shadow: 0 1px 1px #8fb5a6; }
.search input { flex: 1; min-width: 0; padding-left: 10px; font-size: 14px; }
.search input::placeholder { color: #555; opacity: 1; }
.run::after { content: ""; position: absolute; bottom: 0; width: 6px; height: 3px; border-radius: 2px; background: #75897f; }
.cur::before { content: ""; position: absolute; inset: 2px 3px 0; border-radius: 4px; background: #e6f6f0; }
.cur svg { position: relative; }
.cur::after { width: 16px; background: #0078d4; }
.tray { display: flex; justify-content: flex-end; align-items: center; padding-right: 19px; }
.sync { margin-left: 18px; }
.ime { width: 16px; margin-left: 15px; font-size: 15px; }
.pin { margin-left: 22px; }
.vol { margin-left: 22px; gap: 7px; }
time { margin-left: 14px; text-align: right; }
</style>
